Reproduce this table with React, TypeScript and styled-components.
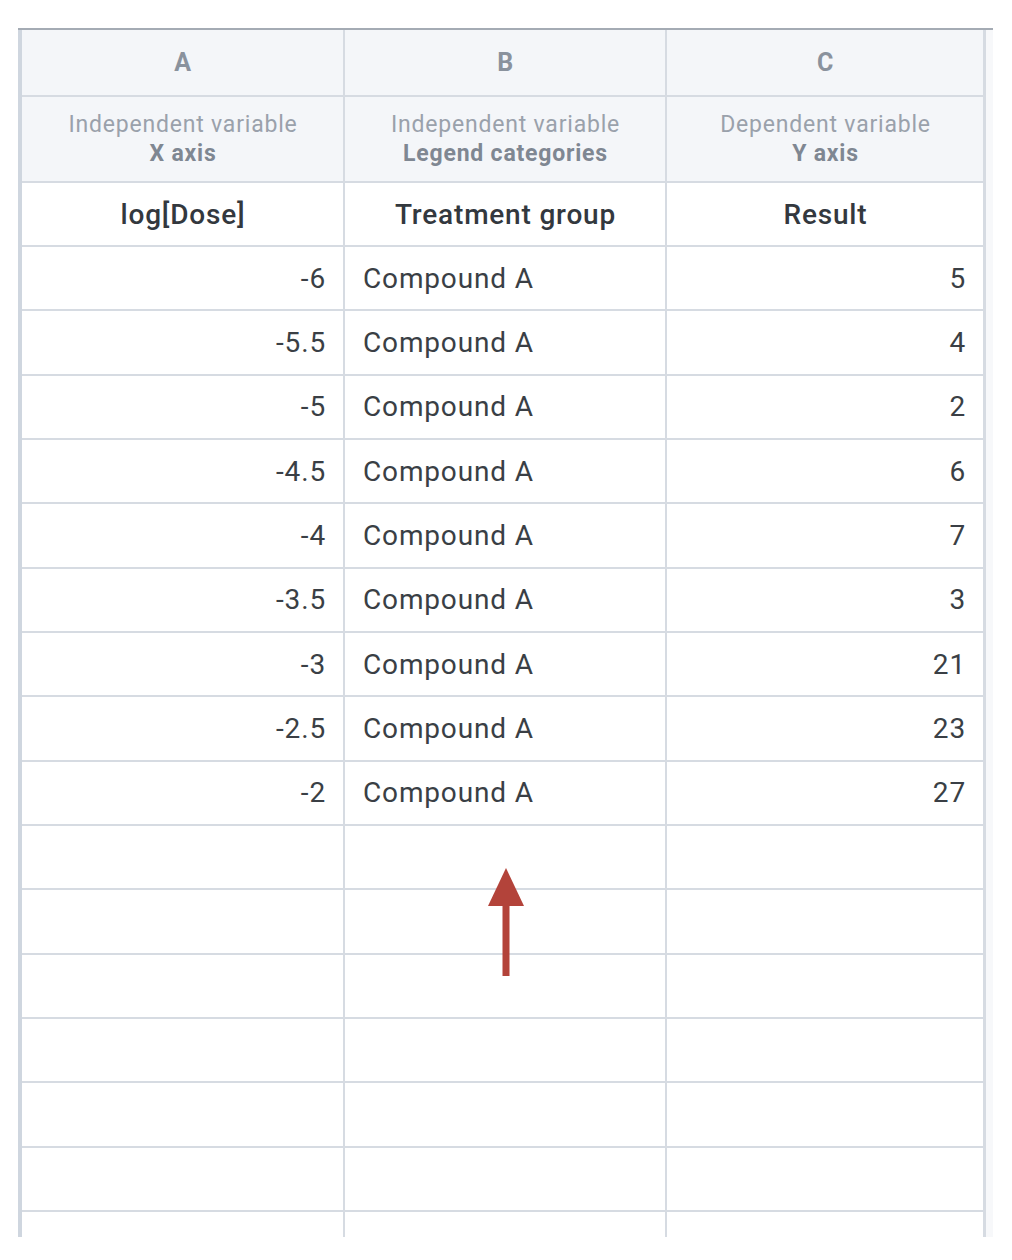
import React from "react";
import styled, { createGlobalStyle } from "styled-components";

const Global = createGlobalStyle`
  html, body { margin: 0; padding: 0; background: #ffffff; }
  body { font-family: Roboto, "Liberation Sans", Arial, sans-serif; }
  *, *::before, *::after { box-sizing: border-box; }
`;

const Page = styled.div`
  width: 1012px;
  height: 1260px;
  padding: 28px 0 0 18px;
  position: relative;
  overflow: hidden;
`;

const Frame = styled.div`
  width: 975px;
  height: 1209px;
  border-top: 2px solid #a4abb4;
  display: flex;
  overflow: hidden;
  background: #fbfbfc;
`;

const Sheet = styled.div`
  flex: 0 0 968px;
  width: 968px;
  display: grid;
  grid-template-columns: 321px 320px 316px;
  grid-auto-rows: 62.33px;
  grid-template-rows: 65px 84px 62px;
  gap: 2px;
  background: #d6dbe2;
  border-left: 4px solid #cfd6df;
  border-right: 3px solid #d6dbe2;
  align-content: start;
`;

const Cell = styled.div<{ $align?: "left" | "right" | "center"; $tone?: "head" | "body" }>`
  background: ${(p) => (p.$tone === "head" ? "#f4f6f9" : "#ffffff")};
  display: flex;
  flex-direction: column;
  justify-content: center;
  align-items: ${(p) =>
    p.$align === "right" ? "flex-end" : p.$align === "left" ? "flex-start" : "center"};
  padding: 0 17px 0 18px;
  overflow: hidden;
  white-space: nowrap;
`;

const Letter = styled.span`
  font-size: 25px;
  font-weight: 700;
  color: #8a929d;
  letter-spacing: 0.5px;
`;

const SubTitle = styled.span`
  font-size: 23px;
  line-height: 29px;
  color: #9aa1ab;
  letter-spacing: 0.8px;
`;

const SubStrong = styled.span`
  font-size: 23px;
  line-height: 29px;
  font-weight: 700;
  color: #7f8792;
  letter-spacing: 0.8px;
`;

const ColName = styled.span`
  font-size: 28px;
  font-weight: 500;
  color: #33383e;
  letter-spacing: 0.8px;
`;

const Value = styled.span`
  font-size: 28px;
  color: #3a3f45;
  letter-spacing: 0.85px;
`;

const Strip = styled.div`
  flex: 1 1 auto;
  background: #f7f8fa;
`;

const Arrow = styled.svg`
  position: absolute;
  left: 486px;
  top: 866px;
`;

const data: [string, string, string][] = [
  ["-6", "Compound A", "5"],
  ["-5.5", "Compound A", "4"],
  ["-5", "Compound A", "2"],
  ["-4.5", "Compound A", "6"],
  ["-4", "Compound A", "7"],
  ["-3.5", "Compound A", "3"],
  ["-3", "Compound A", "21"],
  ["-2.5", "Compound A", "23"],
  ["-2", "Compound A", "27"],
];

const heads = [
  { letter: "A", sub: "Independent variable", strong: "X axis", name: "log[Dose]" },
  { letter: "B", sub: "Independent variable", strong: "Legend categories", name: "Treatment group" },
  { letter: "C", sub: "Dependent variable", strong: "Y axis", name: "Result" },
];

export default function App() {
  const empty = Array.from({ length: 8 });
  return (
    <Page>
      <Global />
      <Frame>
        <Sheet>
          {heads.map((h) => (
            <Cell key={"l" + h.letter} $tone="head">
              <Letter>{h.letter}</Letter>
            </Cell>
          ))}
          {heads.map((h) => (
            <Cell key={"s" + h.letter} $tone="head">
              <SubTitle>{h.sub}</SubTitle>
              <SubStrong>{h.strong}</SubStrong>
            </Cell>
          ))}
          {heads.map((h) => (
            <Cell key={"n" + h.letter}>
              <ColName>{h.name}</ColName>
            </Cell>
          ))}
          {data.map((r, i) => (
            <React.Fragment key={"r" + i}>
              <Cell $align="right">
                <Value>{r[0]}</Value>
              </Cell>
              <Cell $align="left">
                <Value>{r[1]}</Value>
              </Cell>
              <Cell $align="right">
                <Value>{r[2]}</Value>
              </Cell>
            </React.Fragment>
          ))}
          {empty.map((_, i) => (
            <React.Fragment key={"e" + i}>
              <Cell />
              <Cell />
              <Cell />
            </React.Fragment>
          ))}
        </Sheet>
        <Strip />
      </Frame>
      <Arrow width="40" height="112" viewBox="0 0 40 112">
        <polygon points="20,2 38,40 2,40" fill="#b3433a" />
        <rect x="16.5" y="38" width="7" height="72" fill="#b3433a" />
      </Arrow>
    </Page>
  );
}
